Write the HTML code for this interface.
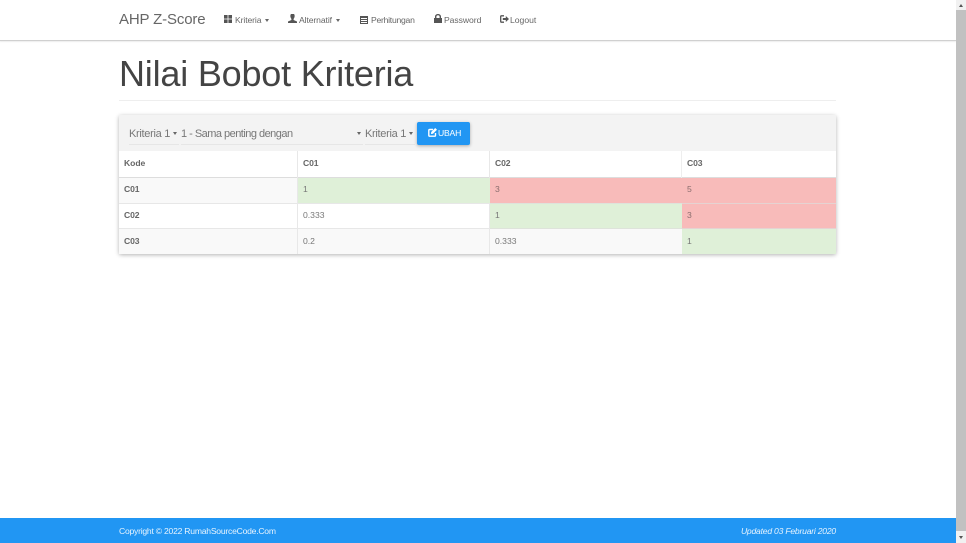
<!DOCTYPE html>
<html><head><meta charset="utf-8">
<style>
html,body{margin:0;padding:0;background:#fff;width:966px;height:543px;overflow:hidden}
body{font-family:"Liberation Sans",sans-serif;position:relative;color:#666}
.a{position:absolute;white-space:nowrap}
.nav{font-size:8.6px;line-height:12px;color:#666;top:14px}
.cell{position:absolute;box-sizing:border-box;font-size:8.6px;line-height:12px;padding-left:5px;white-space:nowrap}
.b{font-weight:bold;color:#666;letter-spacing:-.1px}
.sel{font-size:11px;line-height:14px;color:#777;top:127px}
.ul{position:absolute;top:144px;height:1px;background:#e6e6e6}
.car{position:absolute;width:0;height:0;border-left:2.5px solid transparent;border-right:2.5px solid transparent;border-top:3px solid #666}
svg{position:absolute}
</style></head><body>
<div class="a" style="left:0;top:0;width:956px;height:40px;background:#fff;border-bottom:1px solid #d0d0d0;box-shadow:0 1px 1px rgba(0,0,0,.08)"></div>
<div class="a" style="left:119px;top:11px;font-size:15px;line-height:18px;color:#666;letter-spacing:-.15px">AHP Z-Score</div>

<svg style="left:224px;top:15px" width="8" height="8"><path fill="#555" d="M0 0h3.6v3.6H0zM4.4 0H8v3.6H4.4zM0 4.4h3.6V8H0zM4.4 4.4H8V8H4.400z"/></svg>
<div class="a nav" style="left:235px;letter-spacing:-.1px">Kriteria</div><div class="car" style="left:265px;top:19px"></div>
<svg style="left:288px;top:14px" width="9" height="9"><path fill="#555" d="M3 0h3l.6 1v2L5.6 5v1L9 7.500V9H0V7.500L3.400 6V5L2.400 3V1z"/></svg>
<div class="a nav" style="left:299px;letter-spacing:-.1px">Alternatif</div><div class="car" style="left:336px;top:19px"></div>
<svg style="left:360px;top:15px" width="8" height="9"><path fill="#555" d="M0 1h8v8H0zM1 3v1h6V3zM1 5v1h6V5zM1 7v1h6V7z" fill-rule="evenodd"/></svg>
<div class="a nav" style="left:371px;letter-spacing:-.25px">Perhitungan</div>
<svg style="left:434px;top:14px" width="8" height="9"><path fill="#555" d="M0 4h1V2.500C1 1 2.500 0 4 0s3 1 3 2.500V4h1v5H0zM2.400 4h3.200V2.700C5.600 1.800 4.800 1.300 4 1.300s-1.600.5-1.600 1.400z" fill-rule="evenodd"/></svg>
<div class="a nav" style="left:444px;letter-spacing:-.05px">Password</div>
<svg style="left:500px;top:15px" width="9" height="8"><path fill="none" stroke="#555" stroke-width="1.300" d="M4 .8H1.400C1 .8.700 1.100.700 1.500v5c0 .4.300.7.700.7H4"/><path fill="#555" d="M2.800 3h3V1l3.200 3-3.200 3V5h-3z"/></svg>
<div class="a nav" style="left:510px">Logout</div>

<div class="a" style="left:119px;top:52px;font-size:36px;line-height:44px;color:#444;letter-spacing:-.2px">Nilai Bobot Kriteria</div>
<div class="a" style="left:119px;top:100px;width:717px;height:1px;background:#eee"></div>

<!-- panel -->
<div class="a" style="left:119px;top:115px;width:717px;height:139px;background:#fff;border-radius:2px;box-shadow:0 1px 4px rgba(0,0,0,.3)"></div>
<div class="a" style="left:119px;top:115px;width:717px;height:36px;background:#f3f3f3;border-radius:2px 2px 0 0"></div>
<div class="a sel" style="left:129px;letter-spacing:-.3px">Kriteria 1</div><div class="car" style="left:173px;top:132px"></div><div class="ul" style="left:129px;width:50px"></div>
<div class="a sel" style="left:181px;letter-spacing:-.52px">1 - Sama penting dengan</div><div class="car" style="left:357px;top:132px"></div><div class="ul" style="left:181px;width:182px"></div>
<div class="a sel" style="left:365px;letter-spacing:-.3px">Kriteria 1</div><div class="car" style="left:409px;top:132px"></div><div class="ul" style="left:365px;width:50px"></div>
<div class="a" style="left:417px;top:122px;width:53px;height:23px;background:#2196f3;border-radius:2px;box-shadow:0 1px 3px rgba(0,0,0,.3)"></div>
<svg style="left:428px;top:128px" width="9" height="9"><path fill="none" stroke="#fff" stroke-width="1.400" d="M5 1.500H1.800C1.200 1.500.8 1.900.8 2.500v4.700c0 .6.400 1 1 1h4.700c.6 0 1-.4 1-1V5"/><path fill="#fff" d="M7.200 0L9 1.800 5 5.800 3 6l.2-2z"/></svg>
<div class="a" style="left:438px;top:127px;font-size:8.6px;line-height:12px;color:#fff;letter-spacing:-.2px">UBAH</div>

<!-- header row -->
<div class="cell b" style="left:119px;top:151px;width:179px;height:26px;padding-top:6px;letter-spacing:-.05px">Kode</div>
<div class="cell b" style="left:298px;top:151px;width:192px;height:26px;padding-top:6px">C01</div>
<div class="cell b" style="left:490px;top:151px;width:192px;height:26px;padding-top:6px">C02</div>
<div class="cell b" style="left:682px;top:151px;width:154px;height:26px;padding-top:6px">C03</div>
<div class="a" style="left:119px;top:177px;width:717px;height:1px;background:#ddd"></div>

<!-- rows -->
<div class="cell b" style="left:119px;top:178px;width:179px;height:25px;background:#f9f9f9;padding-top:5px">C01</div>
<div class="cell" style="left:298px;top:178px;width:192px;height:25px;background:#dff0d8;padding-top:5px;color:#777">1</div>
<div class="cell" style="left:490px;top:178px;width:192px;height:25px;background:#f8bbba;padding-top:5px;color:#8a6d6d">3</div>
<div class="cell" style="left:682px;top:178px;width:154px;height:25px;background:#f8bbba;padding-top:5px;color:#8a6d6d">5</div>

<div class="cell b" style="left:119px;top:203px;width:179px;height:26px;background:#fff;padding-top:6px">C02</div>
<div class="cell" style="left:298px;top:203px;width:192px;height:26px;background:#fff;padding-top:6px;color:#777">0.333</div>
<div class="cell" style="left:490px;top:203px;width:192px;height:26px;background:#dff0d8;padding-top:6px;color:#777">1</div>
<div class="cell" style="left:682px;top:203px;width:154px;height:26px;background:#f8bbba;padding-top:6px;color:#8a6d6d">3</div>

<div class="cell b" style="left:119px;top:229px;width:179px;height:25px;background:#f9f9f9;padding-top:6px">C03</div>
<div class="cell" style="left:298px;top:229px;width:192px;height:25px;background:#f9f9f9;padding-top:6px;color:#777">0.2</div>
<div class="cell" style="left:490px;top:229px;width:192px;height:25px;background:#f9f9f9;padding-top:6px;color:#777">0.333</div>
<div class="cell" style="left:682px;top:229px;width:154px;height:25px;background:#dff0d8;padding-top:6px;color:#777">1</div>

<!-- grid lines -->
<div class="a" style="left:119px;top:203px;width:717px;height:1px;background:#ddd;opacity:.7"></div>
<div class="a" style="left:119px;top:228px;width:717px;height:1px;background:#ddd;opacity:.7"></div>
<div class="a" style="left:297px;top:151px;width:1px;height:27px;background:#e8e8e8"></div>
<div class="a" style="left:297px;top:178px;width:1px;height:76px;background:#e8e8e8"></div>
<div class="a" style="left:489px;top:151px;width:1px;height:27px;background:#e8e8e8"></div>
<div class="a" style="left:489px;top:203px;width:1px;height:51px;background:#e8e8e8"></div>
<div class="a" style="left:681px;top:151px;width:1px;height:27px;background:#eee"></div>

<!-- footer -->
<div class="a" style="left:0;top:518px;width:956px;height:25px;background:#2196f3"></div>
<div class="a" style="left:119px;top:525px;font-size:8.6px;line-height:12px;color:#e6f3fe;letter-spacing:-.24px">Copyright © 2022 RumahSourceCode.Com</div>
<div class="a" style="right:130px;top:525px;font-size:8.6px;line-height:12px;color:#e6f3fe;font-style:italic;letter-spacing:-.22px">Updated 03 Februari 2020</div>

<!-- scrollbar -->
<div class="a" style="left:956px;top:0;width:10px;height:543px;background:#f1f1f1"></div>
<div class="a" style="left:956px;top:10px;width:10px;height:521px;background:#c1c1c1"></div>
<div class="a" style="left:958.500px;top:4px;width:0;height:0;border-left:2.500px solid transparent;border-right:2.500px solid transparent;border-bottom:3px solid #555"></div>
<div class="a" style="left:958.500px;top:536px;width:0;height:0;border-left:2.500px solid transparent;border-right:2.500px solid transparent;border-top:3px solid #555"></div>
</body></html>
